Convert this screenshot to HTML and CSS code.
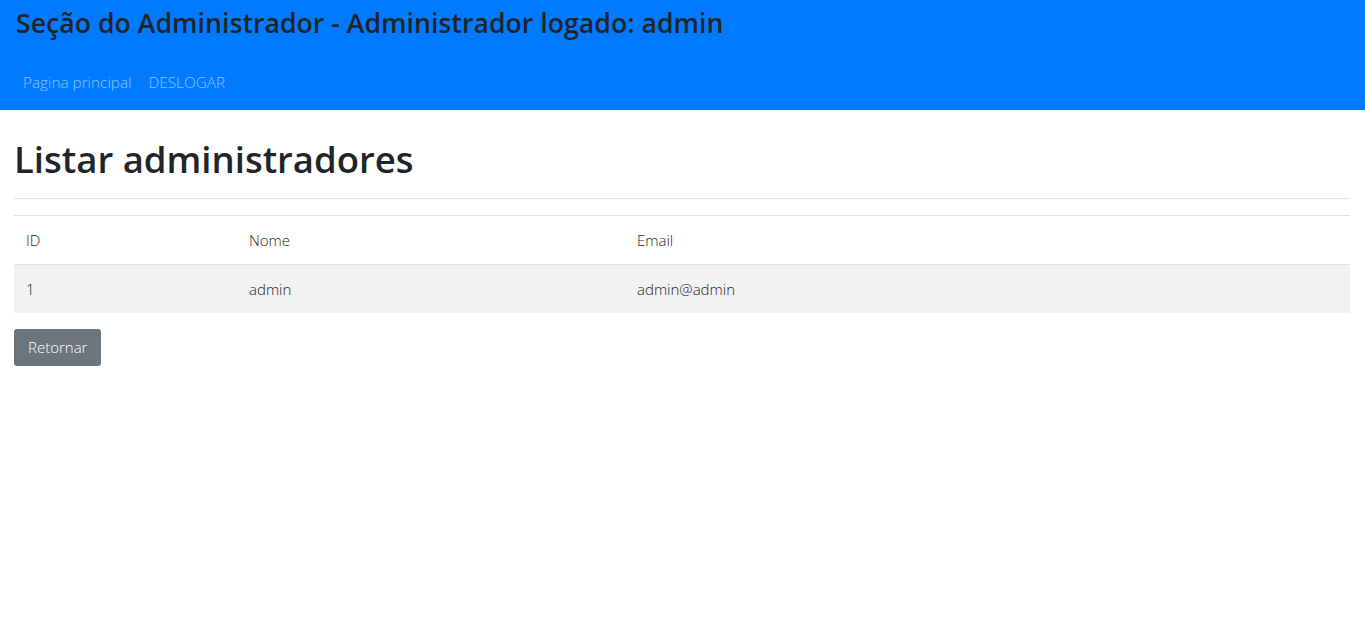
FILE: index.html
```html
<!DOCTYPE html>
<html lang="pt">
<head>
<meta charset="utf-8">
<title>Listar administradores</title>
<link rel="stylesheet" href="styles.css">
</head>
<body>
<header class="topbar">
  <div class="brand">Seção do Administrador - Administrador logado: admin</div>
  <nav class="nav">
    <a class="nav-link" href="#">Pagina principal</a>
    <a class="nav-link" href="#">DESLOGAR</a>
  </nav>
</header>
<main class="content">
  <h1 class="title">Listar administradores</h1>
  <hr class="rule">
  <table class="table">
    <thead>
      <tr><th class="col-id">ID</th><th class="col-name">Nome</th><th>Email</th></tr>
    </thead>
    <tbody>
      <tr class="striped"><td>1</td><td>admin</td><td>admin@admin</td></tr>
    </tbody>
  </table>
  <a class="btn" href="#">Retornar</a>
</main>
</body>
</html>
```
FILE: styles.css
```css
* { box-sizing: border-box; }
body {
  margin: 0;
  font-family: "Open Sans", "Noto Sans", sans-serif;
  color: #212529;
  background: #fff;
}
.topbar {
  background: #007bff;
  height: 110px;
  padding: 5px 16px 0;
}
.brand {
  font-size: 26.7px;
  font-weight: 600;
  color: #212529;
  line-height: 36px;
}
.nav {
  display: flex;
  gap: 17px;
  padding: 29px 0 0 7px;
}
.nav-link {
  color: rgba(255,255,255,0.55);
  text-decoration: none;
  font-size: 15.3px;
  font-weight: 300;
  line-height: 24px;
}
.content {
  padding: 24px 15px 0 14px;
}
.title {
  margin: 0;
  font-size: 36.5px;
  font-weight: 600;
  line-height: 50px;
}
.rule {
  margin: 14px 0 16px;
  border: 0;
  border-top: 1px solid #e5e5e5;
}
.table {
  width: 100%;
  border-collapse: collapse;
  font-size: 15px;
  font-weight: 300;
  color: #212529;
}
.table th, .table td {
  text-align: left;
  font-weight: 300;
  padding: 12px 12px;
  height: 49px;
  border-top: 1px solid #dee2e6;
}
.table tbody td { height: 48px; }
.table thead th { border-bottom: 1px solid #dee2e6; }
.col-id { width: 223px; }
.col-name { width: 388px; }
.striped { background: #f2f2f2; }
.btn {
  display: inline-block;
  margin-top: 16px;
  background: #6c757d;
  color: #fff;
  text-decoration: none;
  font-size: 15px;
  font-weight: 300;
  padding: 6px 14px;
  border-radius: 3px;
  line-height: 25px;
}
```
